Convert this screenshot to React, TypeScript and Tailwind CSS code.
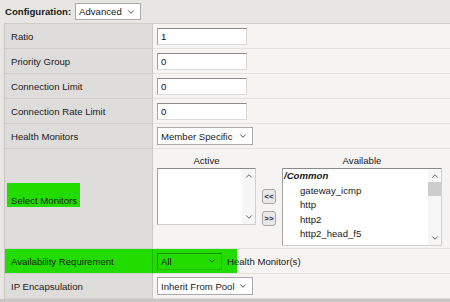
import type { ReactNode } from "react";
import { ChevronDown, ChevronUp } from "lucide-react";
import clsx from "clsx";

const GREEN = "bg-[#22dc00]";

const Select = ({ value, className }: { value: string; className?: string }) => (
  <div
    className={clsx(
      "flex items-center justify-between border pl-[3px] pr-[4px]",
      className ?? "border-[#a9a9a9] bg-white"
    )}
  >
    <span>{value}</span>
    <ChevronDown size={10} strokeWidth={2.2} className="text-[#444]" />
  </div>
);

const TextBox = ({ value }: { value: string }) => (
  <input
    readOnly
    value={value}
    className="h-[17px] w-[90px] border border-t-[#8a8a8a] border-l-[#a3a3a3] border-r-[#dadada] border-b-[#dadada] bg-white pl-[3px] text-[#111] outline-none"
  />
);

const Row = ({
  label,
  children,
}: {
  label: ReactNode;
  children: ReactNode;
}) => (
  <div className="flex h-[25px]">
    <div className="flex w-[148px] items-center border-b border-r border-b-[#d2d0cd] border-r-[#cbc9c6] bg-[#dfdddb] pl-[6px]">
      {label}
    </div>
    <div className="flex flex-1 items-center border-b border-[#e2e1de] bg-[#f5f4f2] pl-[4px]">
      {children}
    </div>
  </div>
);

const ScrollBar = ({ thumb }: { thumb?: boolean }) => (
  <div className="flex w-[13px] flex-col items-center bg-[#f6f6f6]">
    <ChevronUp size={10} strokeWidth={2.2} className="mt-[2px] text-[#555]" />
    {thumb && <div className="mt-[1px] h-[14px] w-full bg-[#cdcdcd]" />}
    <div className="flex-1" />
    <ChevronDown size={10} strokeWidth={2.2} className="mb-[2px] text-[#555]" />
  </div>
);

const MoveButton = ({ label }: { label: string }) => (
  <div className="flex h-[15px] w-[14px] items-center justify-center rounded-[3px] border border-[#a7a7a7] bg-[#e9e9e9] text-[8px] font-bold leading-none text-[#1c2a4a]">
    {label}
  </div>
);

const monitors = ["gateway_icmp", "http", "http2", "http2_head_f5", "https"];

export default function App() {
  return (
    <div className="h-[302px] w-[450px] overflow-hidden bg-[#e8e6e2] font-['Liberation_Sans',Arial,sans-serif] text-[9.6px] leading-[11px] text-[#1a1a1a]">
      <div className="flex h-[23px] items-center gap-[4px] pl-[5px]">
        <span className="font-bold">Configuration:</span>
        <Select value="Advanced" className="h-[17px] w-[66px] border-[#a9a9a9] bg-white" />
      </div>

      <div className="ml-[4px] border-l border-t border-l-[#c8c6c3] border-t-[#cfcdca]">
        <Row label="Ratio">
          <TextBox value="1" />
        </Row>
        <Row label="Priority Group">
          <TextBox value="0" />
        </Row>
        <Row label="Connection Limit">
          <TextBox value="0" />
        </Row>
        <Row label="Connection Rate Limit">
          <TextBox value="0" />
        </Row>
        <Row label="Health Monitors">
          <Select value="Member Specific" className="h-[18px] w-[96px] border-[#a9a9a9] bg-white" />
        </Row>

        <div className="flex h-[100px]">
          <div className="flex w-[148px] items-center border-b border-r border-b-[#d2d0cd] border-r-[#cbc9c6] bg-[#dfdddb] pl-[2px]">
            <div className={clsx("mb-[7px] flex h-[24px] w-[73px] items-end pb-[1px] pl-[4px]", GREEN)}>
              Select Monitors
            </div>
          </div>
          <div className="flex flex-1 items-start gap-[6px] border-b border-[#e2e1de] bg-[#f5f4f2] pl-[4px] pt-[6px]">
            <div className="flex w-[99px] flex-col">
              <div className="mb-[2px] text-center">Active</div>
              <div className="flex h-[57px] border border-t-[#8a8a8a] border-l-[#a3a3a3] border-r-[#d0d0d0] border-b-[#d0d0d0] bg-white">
                <div className="flex-1" />
                <ScrollBar />
              </div>
            </div>
            <div className="flex flex-col gap-[7px] pt-[34px]">
              <MoveButton label="<<" />
              <MoveButton label=">>" />
            </div>
            <div className="flex w-[160px] flex-col">
              <div className="mb-[2px] text-center">Available</div>
              <div className="flex h-[78px] overflow-hidden border border-t-[#8a8a8a] border-l-[#a3a3a3] border-r-[#d0d0d0] border-b-[#d0d0d0] bg-white">
                <div className="flex-1 overflow-hidden pl-[1px] leading-[14.6px]">
                  <div className="font-bold italic">/Common</div>
                  {monitors.map((m) => (
                    <div key={m} className="pl-[16px]">
                      {m}
                    </div>
                  ))}
                </div>
                <ScrollBar thumb />
              </div>
            </div>
          </div>
        </div>

        <div className="flex h-[25px]">
          <div className={clsx("flex w-[148px] items-center border-b border-r border-b-[#d2d0cd] border-r-[#1fb800] pl-[6px]", GREEN)}>
            Availability Requirement
          </div>
          <div className="flex flex-1 items-center gap-[5px] border-b border-[#e2e1de] bg-[linear-gradient(to_right,#22dc00_84px,#f5f4f2_84px)] pl-[4px]">
            <Select value="All" className="h-[17px] w-[65px] border-t-[#178f00] border-l-[#178f00] border-r-[#1cc000] border-b-[#1cc000] bg-transparent" />
            <span>Health Monitor(s)</span>
          </div>
        </div>

        <Row label="IP Encapsulation">
          <Select value="Inherit From Pool" className="h-[18px] w-[96px] border-[#a9a9a9] bg-white" />
        </Row>
      </div>
      <div className="h-[4px] bg-[#c9c7c4]" />
    </div>
  );
}
